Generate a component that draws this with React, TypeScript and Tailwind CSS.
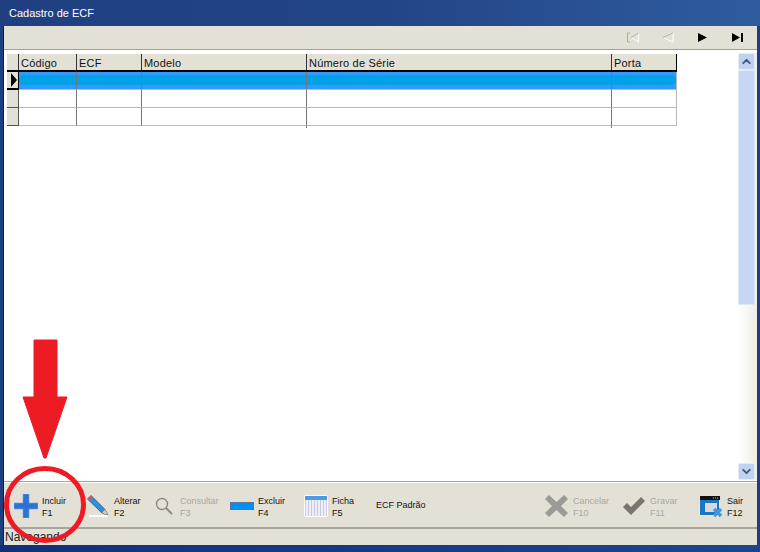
import { ChevronUp, ChevronDown } from 'lucide-react';

const COLS = [
  { label: 'Código', w: 'w-[58px]' },
  { label: 'ECF', w: 'w-[65px]' },
  { label: 'Modelo', w: 'w-[165px]' },
  { label: 'Número de Série', w: 'w-[305px]' },
  { label: 'Porta', w: 'w-[65px]' },
];

function Row({ selected }: { selected?: boolean }) {
  return (
    <div className="flex h-[18px]">
      <div
        className={`w-[12px] bg-[#e3e0d6] border-r flex items-center ${
          selected ? 'border-black border-b-2' : 'border-[#555] border-b'
        }`}
      >
        {selected && (
          <svg width="8" height="14" viewBox="0 0 8 14" className="ml-[3px]">
            <path d="M1 0 L7 7 L1 14 Z" fill="#000" />
          </svg>
        )}
      </div>
      {COLS.map((c, i) => {
        const last = i === COLS.length - 1;
        return (
          <div
            key={c.label}
            className={`${c.w} border-r ${last ? 'border-r-[#b8b8b8]' : 'border-r-[#777]'} ${
              selected ? 'bg-[#3399ff] pt-[3px] border-b border-b-[#c0c0c0]' : 'border-b border-b-[#b8b8b8]'
            }`}
          >
            {selected && (
              <div
                className={`h-[10px] bg-[#00a2e8] ${i === 0 ? 'rounded-l-[5px]' : ''} ${
                  last ? 'rounded-r-[5px]' : ''
                }`}
              />
            )}
          </div>
        );
      })}
    </div>
  );
}

function ToolButton({
  icon,
  label,
  fkey,
  disabled,
  w,
}: {
  icon: React.ReactNode;
  label: string;
  fkey: string;
  disabled?: boolean;
  w: string;
}) {
  return (
    <div className={`flex items-center ${w}`}>
      <div className="w-[33px] h-[32px] flex items-center justify-center shrink-0">{icon}</div>
      <div className={`mt-[2px] text-[9px] leading-[12px] ${disabled ? 'text-[#a8a8a0]' : 'text-[#111]'}`}>
        <div>{label}</div>
        <div>{fkey}</div>
      </div>
    </div>
  );
}

export default function App() {
  return (
    <div className="relative w-[760px] h-[552px] overflow-hidden bg-[#1c3f80] font-['Liberation_Sans',sans-serif]">
      {/* Title */}
      <div className="h-[26px] pl-[9px] flex items-center text-[11px] text-white bg-gradient-to-r from-[#1f3f80] via-[#224586] to-[#2f5c9f]">
        Cadastro de ECF
      </div>

      <div className="ml-[3px] mr-[3px] h-[519px] bg-[#e3e0d6] border-l border-[#0a1f50] flex flex-col">
        {/* Nav bar */}
        <div className="h-[23px] flex items-center justify-end shrink-0 pr-[2px]">
          <div className="w-[35px] flex justify-center">
            <svg width="14" height="11" viewBox="0 0 14 11" fill="none">
              <path d="M1.5 1 V10 M12.5 1 L5 5.5 L12.5 10 Z" stroke="#fff" />
              <path d="M4 1 H1.5 V10 H4 M12.5 1 L5 5.5" stroke="#aaa" />
            </svg>
          </div>
          <div className="w-[35px] flex justify-center">
            <svg width="12" height="11" viewBox="0 0 12 11" fill="none">
              <path d="M11 1 L1 5.5 L11 10 Z" stroke="#fff" />
              <path d="M11 1 L1 5.5" stroke="#aaa" />
            </svg>
          </div>
          <div className="w-[35px] flex justify-center">
            <svg width="9" height="9" viewBox="0 0 9 9">
              <path d="M0 0 L9 4.5 L0 9 Z" fill="#000" />
            </svg>
          </div>
          <div className="w-[35px] flex justify-center">
            <svg width="12" height="9" viewBox="0 0 12 9">
              <path d="M0 0 L8 4.5 L0 9 Z M9 0 H11 V9 H9 Z" fill="#000" />
            </svg>
          </div>
        </div>

        {/* Grid area */}
        <div className="h-[433px] shrink-0 bg-white border-t border-[#a0a0a0] border-b border-b-[#a8a69c] flex">
          <div className="flex-1 pl-[3px] pt-[4px]">
            <div className="flex h-[18px] border-b-2 border-black w-[670px]">
              <div className="w-[12px] bg-[#e3e0d6] border-r border-[#333]" />
              {COLS.map((c, i) => (
                <div
                  key={c.label}
                  className={`${c.w} bg-[#e3e0d6] border-r ${
                    i === COLS.length - 1 ? 'border-black' : 'border-[#333]'
                  } pl-[2px] text-[11px] tracking-[0.2px] leading-[18px] text-[#111]`}
                >
                  {c.label}
                </div>
              ))}
            </div>
            <Row selected />
            <Row />
            <Row />
            {/* column lines run a little past the last row */}
            <div className="flex h-[2px]">
              <div className="w-[300px] border-r border-[#777]" />
              <div className="w-[305px] border-r border-[#777]" />
            </div>
          </div>

          {/* Scrollbar */}
          <div className="w-[19px] mt-[3px] mb-[1px] pr-[2px] flex flex-col bg-gradient-to-r from-white to-[#eeeee6]">
            <div className="h-[17px] shrink-0 bg-[#c0d2ee] border border-[#e4ecf8] rounded-[2px] flex items-center justify-center">
              <ChevronUp size={13} strokeWidth={3.5} className="text-[#3d5a80]" />
            </div>
            <div className="h-[235px] shrink-0 bg-[#c5d7f2] border border-[#dde6f4] rounded-[2px]" />
            <div className="flex-1" />
            <div className="h-[17px] shrink-0 bg-[#c0d2ee] border border-[#e4ecf8] rounded-[2px] flex items-center justify-center">
              <ChevronDown size={13} strokeWidth={3.5} className="text-[#3d5a80]" />
            </div>
          </div>
        </div>

        {/* Bottom toolbar */}
        <div className="h-[47px] shrink-0 border-t border-white border-b-2 border-b-[#a8a69c] flex items-center pl-[5px] pt-[2px]">
          <ToolButton
            w="w-[72px]"
            label="Incluir"
            fkey="F1"
            icon={
              <svg width="24" height="24" viewBox="0 0 24 24">
                <path d="M9 0 H15 V9 H24 V15 H15 V24 H9 V15 H0 V9 H9 Z" fill="#2f72d6" stroke="#6f9fe6" strokeWidth="0.6" />
              </svg>
            }
          />
          <ToolButton
            w="w-[66px]"
            label="Alterar"
            fkey="F2"
            icon={
              <svg width="22" height="22" viewBox="0 0 22 22">
                <path d="M2 21 H21" stroke="#fff" strokeWidth="2" />
                <path d="M0.5 4 L4 0.5 L18 14.5 L21 20 L15 18 Z" fill="#2f90dc" stroke="#1d4f8a" strokeWidth="0.8" />
                <path d="M0.5 4 L4 0.5 L6 2.5 L2.5 6 Z" fill="#d85a50" />
                <path d="M15 18 L18 14.5 L21 20 Z" fill="#e8c890" />
              </svg>
            }
          />
          <ToolButton
            disabled
            w="w-[78px]"
            label="Consultar"
            fkey="F3"
            icon={
              <svg width="18" height="18" viewBox="0 0 18 18" fill="none" stroke="#8a8a85">
                <circle cx="7" cy="7" r="5.5" strokeWidth="1.4" />
                <path d="M11 11 L17 17" strokeWidth="2" />
              </svg>
            }
          />
          <ToolButton
            w="w-[74px]"
            label="Excluir"
            fkey="F4"
            icon={<div className="w-[24px] h-[8px] bg-[#0090f5] border border-[#56789a]" />}
          />
          <ToolButton
            w="w-[77px]"
            label="Ficha"
            fkey="F5"
            icon={
              <div className="w-[24px] h-[22px] border border-[#fff] bg-[#4a9ae8] pt-[4px] rounded-[1px]">
                <div className="h-full bg-[repeating-linear-gradient(90deg,#c8c8e0_0,#c8c8e0_1px,#eeeef8_1px,#eeeef8_3px)]" />
              </div>
            }
          />
          <div className="w-[164px] text-[9px] text-[#111]">ECF Padrão</div>
          <ToolButton
            disabled
            w="w-[77px]"
            label="Cancelar"
            fkey="F10"
            icon={
              <svg width="23" height="22" viewBox="0 0 23 22">
                <path d="M4 0 L11.5 7 L19 0 L23 4 L16 11 L23 18 L19 22 L11.5 15 L4 22 L0 18 L7 11 L0 4 Z" fill="#9a9a96" />
              </svg>
            }
          />
          <ToolButton
            disabled
            w="w-[77px]"
            label="Gravar"
            fkey="F11"
            icon={
              <svg width="22" height="18" viewBox="0 0 22 18">
                <path d="M0 10 L4 6 L8 10 L18 0 L22 4 L8 18 Z" fill="#77776f" />
              </svg>
            }
          />
          <ToolButton
            w="w-[50px]"
            label="Sair"
            fkey="F12"
            icon={
              <svg width="24" height="23" viewBox="0 0 24 23">
                <rect x="0.5" y="1.5" width="20" height="19" fill="#1a78c0" stroke="#e8e8e8" />
                <rect x="1" y="1" width="20" height="4" fill="#111" />
                <path d="M14 3 H19" stroke="#8fc0f0" strokeWidth="1" strokeDasharray="1 1" />
                <rect x="6" y="8" width="12" height="9" fill="#d8d8e0" />
                <path d="M15 14 L22 21 M22 14 L15 21" stroke="#3a9ae0" strokeWidth="3.5" />
              </svg>
            }
          />
        </div>

        {/* Status bar */}
        <div className="h-[15px] shrink-0 pl-[1px] text-[12px] leading-[16px] text-[#222]">Navegando</div>
      </div>
      <div className="h-[7px] bg-gradient-to-r from-[#12307a] to-[#1c4590]" />

      {/* Annotation */}
      <svg width="90" height="220" viewBox="0 0 90 220" className="absolute left-0 top-[335px]">
        <path d="M34 5 H57 V62 H67 L46 123 L44 123 L23 62 H34 Z" fill="#ed1c24" stroke="#ed1c24" strokeLinejoin="round" />
        <ellipse cx="45" cy="169.5" rx="38.5" ry="36" fill="none" stroke="#ed1c24" strokeWidth="5" />
      </svg>
    </div>
  );
}
